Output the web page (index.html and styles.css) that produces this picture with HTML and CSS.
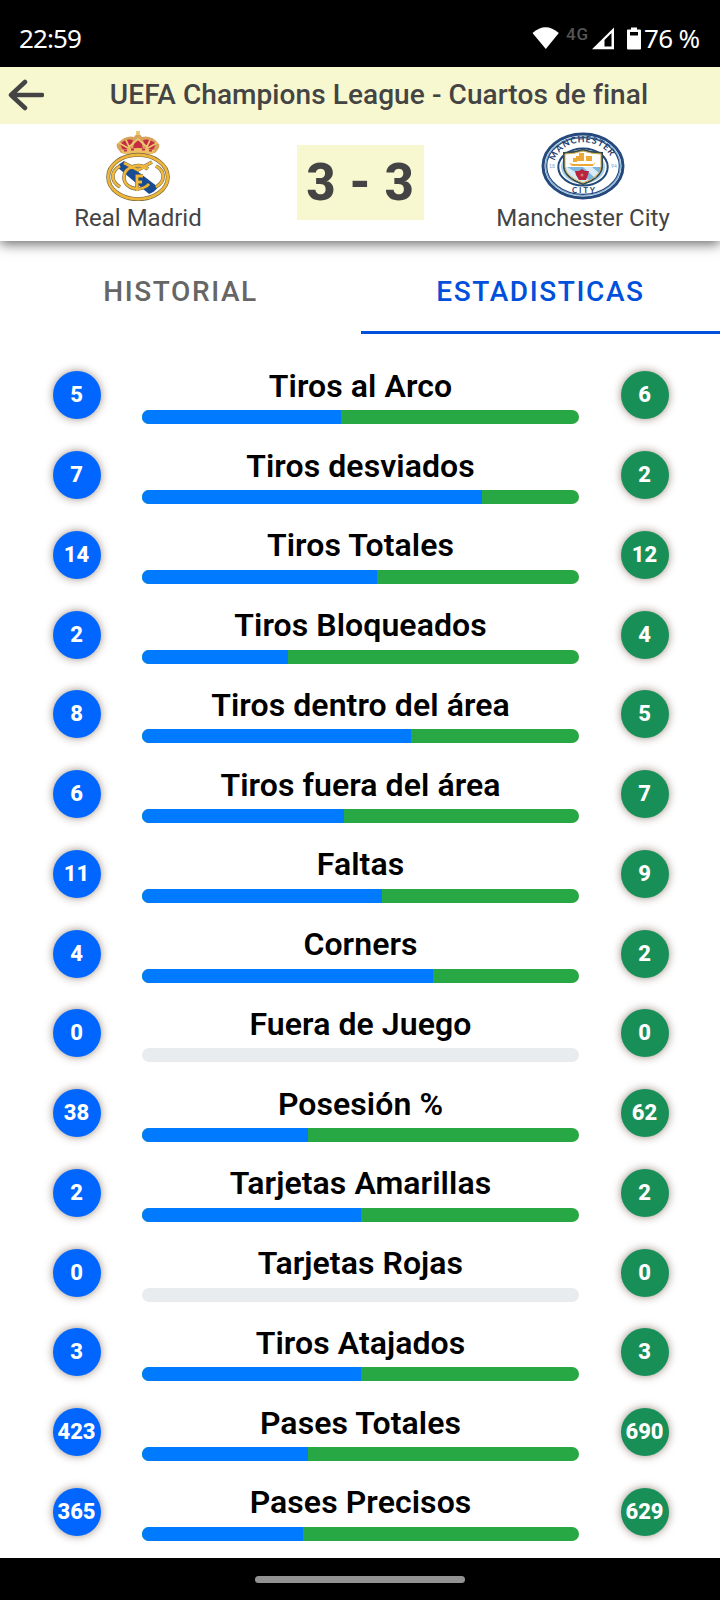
FILE: index.html
```html
<!DOCTYPE html>
<html lang="es">
<head>
<meta charset="utf-8">
<title>Estadisticas</title>
<link rel="stylesheet" href="styles.css">
</head>
<body>
<div class="status">
  <span class="clock">22:59</span>
  <svg class="status-icons" width="112" height="28" viewBox="530 24 112 28">
    <path d="M532.5 33Q545.5 21.500 558.800 33L545.800 49Z" fill="#fff"/>
    <text class="network" x="566" y="39.500" textLength="22">4G</text>
    <path d="M592 49.300L614 27.500V49.300Z" fill="#fff"/><path d="M604.500 40L611.500 33V46.500H604.500Z"/>
    <path d="M631 27.500h6v2h3q1 0 1 1v18q0 1-1 1h-12q-1 0-1-1v-18q0-1 1-1h3Z" fill="#fff"/><path d="M630 32h8v3.500h-8Z"/>
  </svg>
  <span class="charge">76 %</span>
</div>
<header class="topbar">
  <svg class="back" width="36" height="32" viewBox="0 0 36 32"><path d="M17 3L3 16L17 29M3.500 16H34" fill="none" stroke="#444" stroke-width="4.500" stroke-linecap="round" stroke-linejoin="round"/></svg>
  <h1 class="league">UEFA Champions League - Cuartos de final</h1>
</header>
<section class="match">
  <div class="team">
    <svg class="crest" width="64" height="70" viewBox="0 0 64 70">
      <path d="M15 22Q8 14 12 12Q20 4 28 6L32 1L36 6Q45 4 52 12Q56 15 49 22Z" fill="#d9a35b"/>
      <path d="M14 13Q20 7 27 9L24 18L17 19ZM50 13Q44 7 37 9L40 18L47 19ZM29 9H35L37 18H27Z" fill="#c52c43"/>
      <path d="M31 0h2v3h-2zM13 12L22 17L32 8L42 17L51 12M20 9L24 18M44 9L40 18" fill="none" stroke="#edc66e" stroke-width="1.800"/>
      <path d="M15 19Q32 15 49 19L47 23H17Z" fill="#edbd62"/><path d="M18 19.500h3M25 18.500h3M36 18.500h3M43 19.500h3" stroke="#bd344a" stroke-width="2"/>
      <ellipse cx="32" cy="46" rx="29.800" ry="22.200" fill="#fff" stroke="#74673f" stroke-width="4"/>
      <ellipse cx="32" cy="46" rx="29.800" ry="22.200" fill="none" stroke="#eeb53b" stroke-width="2.700"/>
      <path d="M11 36Q14 32 18 30L52 56Q49 61 43 63Z" fill="#174b93"/>
      <path d="M14 56C4 50 5 40 14 35M50 56C60 50 59 40 50 35M18 32L32 39L46 31M42 38C33 31 18 36 18 46C18 59 36 61 43 53M31 60V45H37M31 51H36" fill="none" stroke="#786b47" stroke-width="3.600"/>
      <path d="M14 56C4 50 5 40 14 35M50 56C60 50 59 40 50 35M18 32L32 39L46 31M42 38C33 31 18 36 18 46C18 59 36 61 43 53M31 60V45H37M31 51H36" fill="none" stroke="#f1b83c" stroke-width="2.500"/>
    </svg>
    <span class="team-name">Real Madrid</span>
  </div>
  <div class="score">3 - 3</div>
  <div class="team">
    <svg class="crest" width="84" height="68" viewBox="0 0 84 68">
      <defs><path id="top-arc" d="M14 29A29 23 0 0 1 71 29"/></defs>
      <ellipse cx="42" cy="34" rx="40" ry="32" fill="#fff" stroke="#25497d" stroke-width="3"/>
      <ellipse cx="42" cy="34" rx="37.500" ry="29.500" fill="none" stroke="#7baed3" stroke-width="1.200"/>
      <ellipse cx="42" cy="34" rx="36.300" ry="28.300" fill="none" stroke="#25497d" stroke-width="1.200"/>
      <ellipse cx="42" cy="35" rx="24.700" ry="18.500" fill="#fff" stroke="#24497b" stroke-width="2"/>
      <ellipse cx="42" cy="35" rx="22" ry="16.500" fill="#a9cfe9"/>
      <path d="M23 21Q32 21 42 18Q52 21 61 21V35Q60 46 42 52Q24 46 23 35Z" fill="#fff" stroke="#344b50" stroke-width="2"/>
      <path d="M24 35H60Q59 45 42 51Q25 45 24 35Z" fill="#7fb6df"/><path d="M26 35L48 48L42 51Q25 45 24 35ZM42 35H51L58 41L54 46Z" fill="#d8ebf6"/>
      <path d="M24 22Q33 22 42 19Q51 22 60 22V35Q59 45 42 51Q25 45 24 35Z" fill="none" stroke="#d3ad50" stroke-width="1"/>
      <path d="M28 31L32 32H54V30L52 34H31ZM32 26h4v4h-4zM38 21h5v8h-5zM45 24h6v5h-6zM35 24h3v5h-3z" fill="#eda936"/>
      <path d="M41 37L44 39L48 39L47 43L45 48H38L35 43L34 39L38 39Z" fill="#b9233e"/><circle cx="41" cy="43" r="1.500" fill="#d77b6c"/>
      <text class="crest-text"><textPath href="#top-arc" textLength="68">MANCHESTER</textPath></text>
      <text class="crest-text city" x="31" y="60.500" textLength="23">CITY</text>
      <text class="crest-year" x="8" y="36" textLength="6">18</text><text class="crest-year" x="70" y="36" textLength="6">94</text>
    </svg>
    <span class="team-name">Manchester City</span>
  </div>
</section>
<nav class="tabs"><a class="tab">HISTORIAL</a><a class="tab active">ESTADISTICAS</a></nav>
<main class="stats">
  <div class="row"><b class="dot">5</b><div class="stat"><h2>Tiros al Arco</h2><div class="bar"><i style="width:45.45%"></i></div></div><b class="dot away">6</b></div>
  <div class="row"><b class="dot">7</b><div class="stat"><h2>Tiros desviados</h2><div class="bar"><i style="width:77.78%"></i></div></div><b class="dot away">2</b></div>
  <div class="row"><b class="dot">14</b><div class="stat"><h2>Tiros Totales</h2><div class="bar"><i style="width:53.85%"></i></div></div><b class="dot away">12</b></div>
  <div class="row"><b class="dot">2</b><div class="stat"><h2>Tiros Bloqueados</h2><div class="bar"><i style="width:33.33%"></i></div></div><b class="dot away">4</b></div>
  <div class="row"><b class="dot">8</b><div class="stat"><h2>Tiros dentro del área</h2><div class="bar"><i style="width:61.54%"></i></div></div><b class="dot away">5</b></div>
  <div class="row"><b class="dot">6</b><div class="stat"><h2>Tiros fuera del área</h2><div class="bar"><i style="width:46.15%"></i></div></div><b class="dot away">7</b></div>
  <div class="row"><b class="dot">11</b><div class="stat"><h2>Faltas</h2><div class="bar"><i style="width:55%"></i></div></div><b class="dot away">9</b></div>
  <div class="row"><b class="dot">4</b><div class="stat"><h2>Corners</h2><div class="bar"><i style="width:66.67%"></i></div></div><b class="dot away">2</b></div>
  <div class="row"><b class="dot">0</b><div class="stat"><h2>Fuera de Juego</h2><div class="bar empty"></div></div><b class="dot away">0</b></div>
  <div class="row"><b class="dot">38</b><div class="stat"><h2>Posesión %</h2><div class="bar"><i style="width:38%"></i></div></div><b class="dot away">62</b></div>
  <div class="row"><b class="dot">2</b><div class="stat"><h2>Tarjetas Amarillas</h2><div class="bar"><i style="width:50%"></i></div></div><b class="dot away">2</b></div>
  <div class="row"><b class="dot">0</b><div class="stat"><h2>Tarjetas Rojas</h2><div class="bar empty"></div></div><b class="dot away">0</b></div>
  <div class="row"><b class="dot">3</b><div class="stat"><h2>Tiros Atajados</h2><div class="bar"><i style="width:50%"></i></div></div><b class="dot away">3</b></div>
  <div class="row"><b class="dot">423</b><div class="stat"><h2>Pases Totales</h2><div class="bar"><i style="width:38%"></i></div></div><b class="dot away">690</b></div>
  <div class="row"><b class="dot">365</b><div class="stat"><h2>Pases Precisos</h2><div class="bar"><i style="width:36.9%"></i></div></div><b class="dot away">629</b></div>
</main>
<footer class="gesture"><span></span></footer>
</body>
</html>
```

FILE: styles.css
```css
* { box-sizing: border-box; }
body { margin: 0; width: 720px; height: 1600px; display: flex; flex-direction: column; overflow: hidden; background: #fff; font-family: Roboto, sans-serif; }
.status { height: 67px; flex: none; display: flex; align-items: center; padding: 9px 19px 0 19px; background: #000; color: #fff; font: 26px/36px "Noto Sans", sans-serif; }
.clock { flex: 1; letter-spacing: -0.9px; }
.status-icons { flex: none; margin-right: 2px; }
.network { font: 500 17px Roboto, sans-serif; fill: #555; }
.charge { width: 57px; white-space: nowrap; letter-spacing: -0.7px; }
.topbar { position: relative; z-index: 1; height: 57px; flex: none; display: flex; align-items: center; background: #f8f8d0; color: #444; padding-left: 8px; }
.back { flex: none; margin-bottom: 1px; }
.league { flex: 1; margin: 0 8px 1px 0; padding-left: 2px; text-align: center; font-size: 28px; line-height: 34px; font-weight: 500; letter-spacing: 0.08px; white-space: nowrap; }
.match { position: relative; height: 117px; flex: none; display: grid; grid-template-columns: 276px 1fr 276px; align-items: center; background: #fff; box-shadow: 0 3px 12px rgba(0,0,0,.6); color: #444; }
.team { display: flex; flex-direction: column; align-items: center; padding-bottom: 1px; }
.team:last-child { padding-left: 2px; }
.crest { height: 70px; margin-bottom: 1px; }
.team-name { height: 32px; font-size: 24px; line-height: 32px; white-space: nowrap; }
.crest-text { font: 700 9px Lato, sans-serif; fill: #25406c; }
.city { font-size: 8px; }
.crest-year { font: 5px Lato, sans-serif; fill: #75acd3; }
.score { width: 127px; height: 75px; justify-self: center; background: #f8f8d0; text-align: center; font: 800 51px/75px Roboto, sans-serif; word-spacing: 1px; }
.tabs { height: 93px; flex: none; display: grid; grid-template-columns: 361px 359px; }
.tab { display: grid; place-items: center; padding-top: 8px; color: #666; font-weight: 500; font-size: 28px; line-height: 36px; letter-spacing: 1.6px; }
.active { padding-top: 11px; color: #0050dc; border-bottom: 3px solid #0050dc; }
.stats { height: 1224px; flex: none; padding-top: 26.3px; }
.row { height: 79.75px; display: grid; grid-template-columns: 48px 437px 48px; column-gap: 41.5px; padding-left: 52.5px; }
.dot { width: 48px; height: 48px; margin-top: 11px; border-radius: 50%; background: #06f; color: #fff; text-align: center; font: 800 22px/47px Roboto, sans-serif; box-shadow: 0 0 8px rgba(60,30,10,.5); }
.away { background: #198f58; }
.stat h2 { margin: 6.500px 0 4.700px; height: 39px; text-align: center; font-size: 32px; line-height: 39px; font-weight: 600; letter-spacing: 0.08px; white-space: nowrap; color: #000; }
.bar { height: 14px; overflow: hidden; border-radius: 7px; background: #28a745; }
.bar i { display: block; height: 100%; background: #007bff; }
.bar.empty { background: #e9ecef; }
.gesture { height: 42px; flex: none; display: flex; justify-content: center; align-items: center; background: #000; }
.gesture span { width: 210px; height: 7px; border-radius: 4px; background: #929292; }
```
